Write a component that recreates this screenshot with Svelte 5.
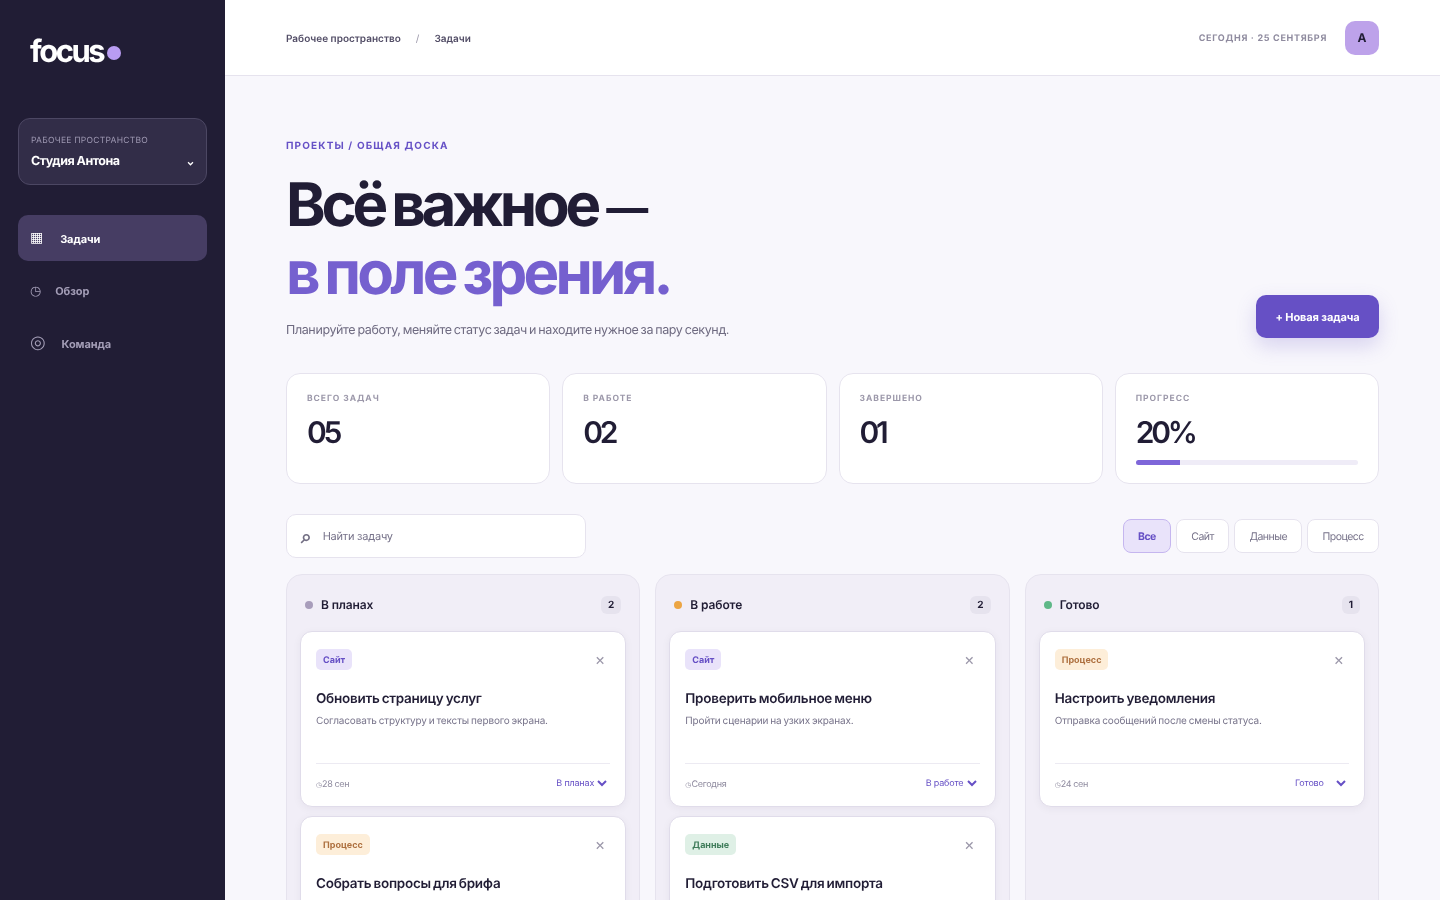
<script>
  const stats = [
    { label: 'Всего задач', value: '05' },
    { label: 'В работе', value: '02' },
    { label: 'Завершено', value: '01' },
    { label: 'Прогресс', value: '20%', progress: 20 }
  ];
  const filters = ['Все', 'Сайт', 'Данные', 'Процесс'];
  const statuses = ['В планах', 'В работе', 'Готово'];
  const columns = [
    { name: 'В планах', count: 2, dot: 'plan', cards: [
      { tag: 'Сайт', kind: 'site', title: 'Обновить страницу услуг', text: 'Согласовать структуру и тексты первого экрана.', date: '28 сен', status: 'В планах' },
      { tag: 'Процесс', kind: 'process', title: 'Собрать вопросы для брифа', text: 'Подготовить короткий список для клиента.', date: '30 сен', status: 'В планах' }
    ]},
    { name: 'В работе', count: 2, dot: 'work', cards: [
      { tag: 'Сайт', kind: 'site', title: 'Проверить мобильное меню', text: 'Пройти сценарии на узких экранах.', date: 'Сегодня', status: 'В работе' },
      { tag: 'Данные', kind: 'data', title: 'Подготовить CSV для импорта', text: 'Привести колонки к единому формату.', date: '27 сен', status: 'В работе' }
    ]},
    { name: 'Готово', count: 1, dot: 'done', cards: [
      { tag: 'Процесс', kind: 'process', title: 'Настроить уведомления', text: 'Отправка сообщений после смены статуса.', date: '24 сен', status: 'Готово' }
    ]}
  ];
</script>

<div class="app">
  <aside class="sidebar">
    <div class="logo">focus<span class="logo-dot"></span></div>
    <div class="workspace">
      <div class="ws-label">Рабочее пространство</div>
      <div class="ws-name">Студия Антона</div>
      <svg class="ws-chevron" viewBox="0 0 8 8" width="7" height="7" aria-hidden="true"><path d="M1.2 2.6 4 5.4l2.8-2.8" fill="none" stroke="currentColor" stroke-width="1.5"/></svg>
    </div>
    <nav class="nav">
      <a class="nav-item active"><span class="nav-icon grid">▦</span>Задачи</a>
      <a class="nav-item"><span class="nav-icon clock-icon">◷</span>Обзор</a>
      <a class="nav-item"><span class="nav-icon ring">◎</span>Команда</a>
    </nav>
  </aside>

  <div class="main">
    <header class="topbar">
      <div class="crumbs"><span>Рабочее пространство</span><span class="sep">/</span><span>Задачи</span></div>
      <div class="top-right">
        <span class="today">Сегодня · 25 сентября</span>
        <div class="avatar">А</div>
      </div>
    </header>

    <main class="content">
      <div class="hero">
        <div>
          <div class="eyebrow">Проекты / общая доска</div>
          <h1>Всё важное <span class="dash">—</span><br /><span class="accent">в поле зрения.</span></h1>
          <p class="lead">Планируйте работу, меняйте статус задач и находите нужное за пару секунд.</p>
        </div>
        <button class="new-task">+ Новая задача</button>
      </div>

      <section class="stats">
        {#each stats as s}
          <div class="stat">
            <div class="stat-label">{s.label}</div>
            <div class="stat-value">{s.value}</div>
            {#if s.progress}
              <div class="track"><div class="fill" style="width: {s.progress}%"></div></div>
            {/if}
          </div>
        {/each}
      </section>

      <section class="toolbar">
        <label class="search">
          <span class="search-icon">⌕</span>
          <input placeholder="Найти задачу" />
        </label>
        <div class="filters">
          {#each filters as f, i}
            <button class="filter" class:on={i === 0}>{f}</button>
          {/each}
        </div>
      </section>

      <section class="board">
        {#each columns as col}
          <div class="column">
            <div class="col-head">
              <span class="dot {col.dot}"></span>
              <span class="col-name">{col.name}</span>
              <span class="count">{col.count}</span>
            </div>
            {#each col.cards as c}
              <article class="card">
                <div class="card-top">
                  <span class="tag {c.kind}">{c.tag}</span>
                  <span class="close">×</span>
                </div>
                <h3>{c.title}</h3>
                <p>{c.text}</p>
                <div class="card-foot">
                  <span class="date"><span class="clock">◷</span> {c.date}</span>
                  <select class="status" value={c.status}>
                    {#each statuses as st}<option value={st}>{st}</option>{/each}
                  </select>
                </div>
              </article>
            {/each}
          </div>
        {/each}
      </section>
    </main>
  </div>
</div>

<style>
  :global(body) {
    margin: 0;
    background: #f8f7fc;
    font-family: Inter, "Noto Sans", sans-serif;
    text-rendering: geometricPrecision;
    color: #211d35;
    overflow: hidden;
  }
  .app {
    display: grid;
    grid-template-columns: 225px 1fr;
    height: 900px;
    overflow: hidden;
    will-change: transform;
  }
  .sidebar {
    background: #211d35;
    padding: 37px 18px 0;
    box-sizing: border-box;
  }
  .logo {
    display: flex;
    align-items: center;
    margin-left: 12px;
    height: 30px;
    color: #fff;
    font-size: 31px;
    font-weight: 700;
    letter-spacing: -0.08em;
    line-height: 30px;
  }
  .logo-dot {
    width: 14px;
    height: 14px;
    margin: 2px 0 0 4px;
    border-radius: 50%;
    background: #b99cf2;
  }
  .workspace {
    position: relative;
    margin-top: 51px;
    height: 67px;
    box-sizing: border-box;
    padding: 17px 12px 0;
    background: #322d48;
    border: 1px solid #4c4763;
    border-radius: 12px;
  }
  .ws-label {
    font-size: 8.5px;
    line-height: 11px;
    letter-spacing: 0.03em;
    text-transform: uppercase;
    color: #9c96b0;
  }
  .ws-name {
    margin-top: 6px;
    font-size: 12.5px;
    line-height: 17px;
    font-weight: 700;
    letter-spacing: -0.04em;
    color: #fff;
  }
  .ws-chevron {
    position: absolute;
    right: 12px;
    top: 41px;
    color: #fff;
  }
  .nav {
    display: flex;
    flex-direction: column;
    gap: 7px;
    margin-top: 30px;
  }
  .nav-item {
    display: flex;
    align-items: center;
    gap: 16px;
    height: 46px;
    padding: 0 12px;
    border-radius: 10px;
    font-size: 11px;
    font-weight: 700;
    letter-spacing: -0.01em;
    color: #a49eb7;
  }
  .nav-item.active {
    gap: 17px;
    padding-top: 1px;
    box-sizing: border-box;
    background: #463d63;
    color: #fff;
  }
  .nav-icon {
    font-size: 14px;
    font-weight: 400;
    line-height: 1;
  }
  .nav-icon.grid {
    margin-top: -2px;
  }
  .nav-icon.clock-icon {
    font-size: 13px;
    margin-right: -2px;
  }
  .nav-icon.ring {
    font-size: 18px;
    margin-top: -2px;
  }
  .main {
    min-width: 0;
  }
  .topbar {
    display: flex;
    align-items: center;
    justify-content: space-between;
    height: 76px;
    box-sizing: border-box;
    padding: 0 61px;
    background: #fff;
    border-bottom: 1px solid #e6e3ee;
  }
  .crumbs {
    display: flex;
    gap: 15px;
    padding-top: 2px;
    font-size: 10px;
    font-weight: 600;
    color: #524d66;
  }
  .crumbs .sep {
    font-weight: 400;
    color: #9c98aa;
  }
  .top-right {
    display: flex;
    align-items: center;
    gap: 18px;
  }
  .today {
    padding-top: 2px;
    font-size: 9px;
    font-weight: 700;
    letter-spacing: 0.078em;
    text-transform: uppercase;
    color: #8f8b9f;
  }
  .avatar {
    display: flex;
    align-items: center;
    justify-content: center;
    width: 34px;
    height: 34px;
    border-radius: 10px;
    background: #bda2ea;
    font-size: 12px;
    font-weight: 700;
    color: #211d35;
  }
  .content {
    padding: 64px 61px 0;
  }
  .hero {
    display: flex;
    align-items: flex-end;
    justify-content: space-between;
  }
  .eyebrow {
    font-size: 10px;
    line-height: 13px;
    font-weight: 700;
    letter-spacing: 0.115em;
    text-transform: uppercase;
    color: #6651c6;
  }
  h1 {
    margin: 18px 0 0;
    font-size: 60px;
    line-height: 68px;
    font-weight: 700;
    letter-spacing: -0.07em;
    word-spacing: -3px;
    color: #211d35;
  }
  .dash {
    margin-left: 2px;
    font-size: 42px;
    letter-spacing: 0;
    vertical-align: 3px;
    line-height: 0;
  }
  .accent {
    letter-spacing: -0.063em;
    color: #7560cf;
  }
  .lead {
    margin: 15px 0 0;
    font-size: 12.5px;
    line-height: 18px;
    letter-spacing: -0.03em;
    word-spacing: -1px;
    color: #6e6a80;
  }
  .new-task {
    height: 43px;
    width: 123px;
    margin-bottom: 2px;
    border: 0;
    border-radius: 10px;
    background: #6650c5;
    box-shadow: 0 8px 20px rgba(102, 80, 197, 0.22);
    color: #fff;
    font: 700 11px Inter, sans-serif;
    letter-spacing: -0.01em;
    text-rendering: geometricPrecision;
    padding-top: 1px;
  }
  .stats {
    display: grid;
    grid-template-columns: repeat(4, 1fr);
    gap: 12px;
    margin-top: 33px;
  }
  .stat {
    height: 111px;
    box-sizing: border-box;
    padding: 20px 20px 0;
    background: #fff;
    border: 1px solid #e6e3ee;
    border-radius: 14px;
  }
  .stat-label {
    font-size: 8.5px;
    line-height: 11px;
    font-weight: 700;
    letter-spacing: 0.115em;
    text-transform: uppercase;
    color: #9c98aa;
  }
  .stat-value {
    margin-top: 10px;
    font-size: 30px;
    line-height: 36px;
    font-weight: 600;
    letter-spacing: -0.11em;
    color: #211d35;
  }
  .track {
    height: 5px;
    margin-top: 9px;
    border-radius: 3px;
    background: #efecf7;
    overflow: hidden;
  }
  .fill {
    height: 100%;
    background: #7e66d9;
  }
  .toolbar {
    display: flex;
    align-items: center;
    justify-content: space-between;
    margin-top: 30px;
  }
  .search {
    display: flex;
    align-items: center;
    gap: 11px;
    width: 300px;
    height: 44px;
    box-sizing: border-box;
    padding: 0 14px;
    background: #fff;
    border: 1px solid #e6e3ee;
    border-radius: 10px;
  }
  .search-icon {
    font-size: 19px;
    font-weight: 700;
    line-height: 1;
    color: #736f84;
  }
  input {
    flex: 1;
    min-width: 0;
    border: 0;
    outline: 0;
    padding: 0;
    background: transparent;
    font: 11px Inter, sans-serif;
    letter-spacing: -0.02em;
    text-rendering: geometricPrecision;
  }
  input::placeholder {
    color: #77738a;
    opacity: 1;
  }
  .filters {
    display: flex;
    gap: 5px;
  }
  .filter {
    height: 34px;
    padding: 1px 14.25px 0;
    background: #fff;
    border: 1px solid #e6e3ee;
    border-radius: 8px;
    color: #77738a;
    font: 10.5px Inter, sans-serif;
    letter-spacing: -0.05em;
    text-rendering: geometricPrecision;
  }
  .filter.on {
    background: #e9e3fa;
    border-color: #c5b6ef;
    color: #6650c5;
    font-weight: 700;
  }
  .board {
    display: grid;
    grid-template-columns: repeat(3, 1fr);
    gap: 15px;
    margin-top: 16px;
  }
  .column {
    min-height: 400px;
    box-sizing: border-box;
    padding: 0 13px 14px;
    background: #f1eef7;
    border: 1px solid #e6e3ee;
    border-radius: 16px;
  }
  .col-head {
    display: flex;
    align-items: center;
    height: 56px;
    padding: 3px 5px 0;
    box-sizing: border-box;
    gap: 8px;
  }
  .dot {
    width: 8px;
    height: 8px;
    border-radius: 50%;
  }
  .dot.plan { background: #a89dbb; }
  .dot.work { background: #eca544; }
  .dot.done { background: #5fb888; }
  .col-name {
    flex: 1;
    font-size: 12px;
    font-weight: 600;
    letter-spacing: -0.01em;
    color: #211d35;
  }
  .count {
    height: 18px;
    padding: 0 7px;
    line-height: 19px;
    text-align: center;
    border-radius: 6px;
    background: #e6e3ee;
    font-size: 10px;
    font-weight: 700;
    color: #211d35;
  }
  .card {
    height: 176px;
    box-sizing: border-box;
    margin-bottom: 9px;
    padding: 17px 15px 0;
    background: #fff;
    border: 1px solid #e0dcea;
    border-radius: 12px;
    box-shadow: 0 2px 8px rgba(33, 29, 53, 0.05);
  }
  .card-top {
    display: flex;
    align-items: center;
    justify-content: space-between;
    height: 21px;
  }
  .tag {
    height: 21px;
    line-height: 23px;
    padding: 0 7px;
    border-radius: 5px;
    font-size: 9px;
    font-weight: 700;
  }
  .tag.site { background: #e9e3fa; color: #6650c5; }
  .tag.process { background: #fdeed9; color: #ae7140; }
  .tag.data { background: #dff0e6; color: #3f7c5a; }
  .close {
    margin: 0 5px 1px 0;
    font-size: 16px;
    line-height: 1;
    color: #9c98aa;
  }
  h3 {
    margin: 20px 0 0;
    font-size: 13.5px;
    line-height: 18px;
    font-weight: 600;
    letter-spacing: -0.02em;
    word-spacing: -1px;
    color: #211d35;
  }
  .card p {
    margin: 6px 0 0;
    height: 49px;
    font-size: 10px;
    line-height: 15px;
    letter-spacing: -0.015em;
    word-spacing: -0.7px;
    color: #77738a;
  }
  .card-foot {
    display: flex;
    align-items: center;
    justify-content: space-between;
    height: 40px;
    box-sizing: border-box;
    border-top: 1px solid #eceaf2;
  }
  .date {
    padding-top: 2px;
    font-size: 9px;
    letter-spacing: -0.03em;
    word-spacing: -0.5px;
    color: #8f8b9f;
  }
  .clock {
    margin-right: -1.5px;
    font-size: 7px;
  }
  .status {
    border: 0;
    outline: 0;
    padding: 0;
    background: transparent;
    color: #6650c5;
    font: 9px Inter, sans-serif;
    letter-spacing: -0.02em;
    text-rendering: geometricPrecision;
  }
</style>
